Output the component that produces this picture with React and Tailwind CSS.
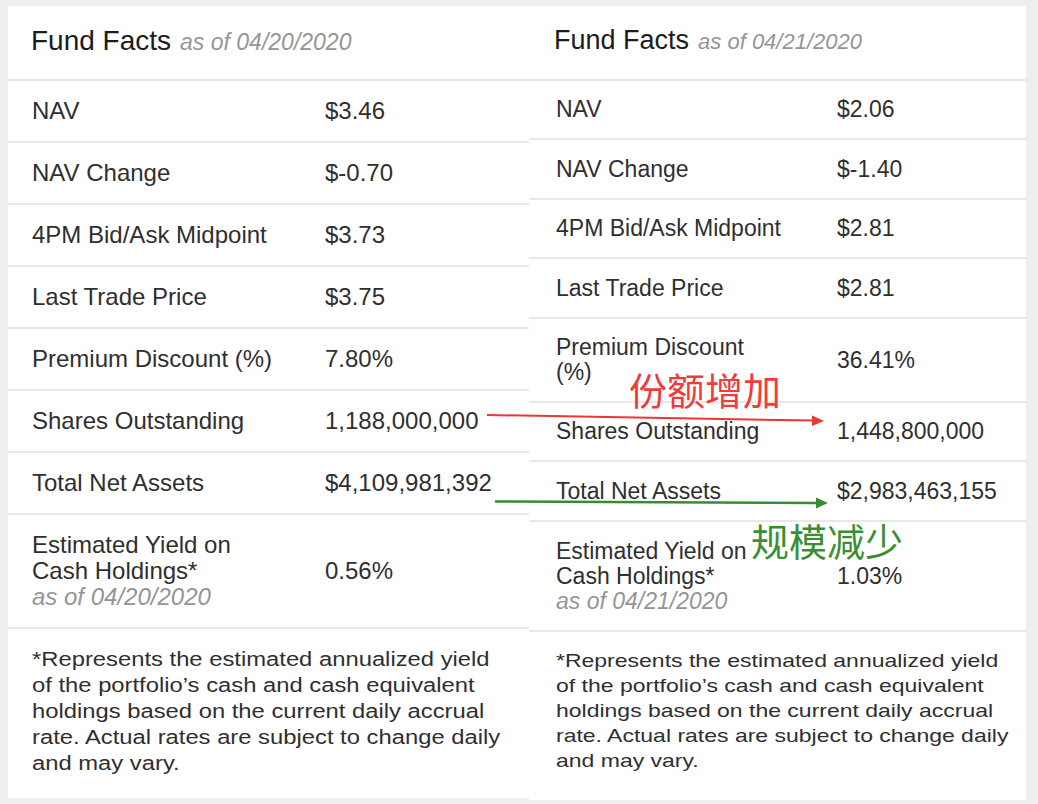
import React from "react";

const footnote = [
  "*Represents the estimated annualized yield",
  "of the portfolio’s cash and cash equivalent",
  "holdings based on the current daily accrual",
  "rate. Actual rates are subject to change daily",
  "and may vary.",
];

const panels = [
  {
    date: "04/20/2020",
    yieldValue: "0.56%",
    rows: [
      [["NAV"], "$3.46", "h-[62px]"],
      [["NAV Change"], "$-0.70", "h-[62px]"],
      [["4PM Bid/Ask Midpoint"], "$3.73", "h-[62px]"],
      [["Last Trade Price"], "$3.75", "h-[62px]"],
      [["Premium Discount (%)"], "7.80%", "h-[62px]"],
      [["Shares Outstanding"], "1,188,000,000", "h-[62px]"],
      [["Total Net Assets"], "$4,109,981,392", "h-[62px]"],
    ],
    panel: "w-[521px] h-[792px]",
    head: "h-[75px] pl-[23px] pt-[19px]",
    title: "text-[28px] leading-[28px]",
    sub: "text-[23px]",
    row: "pl-[24px] text-[24px] leading-[26px]",
    label: "w-[293px]",
    yieldRow: "h-[114px]",
    note: "pl-[24px] pt-[17px] text-[19.5px] leading-[26px]",
    noteLine: "origin-left scale-x-[1.22] whitespace-nowrap",
  },
  {
    date: "04/21/2020",
    yieldValue: "1.03%",
    rows: [
      [["NAV"], "$2.06", "h-[59px]"],
      [["NAV Change"], "$-1.40", "h-[60px]"],
      [["4PM Bid/Ask Midpoint"], "$2.81", "h-[59px]"],
      [["Last Trade Price"], "$2.81", "h-[60px]"],
      [["Premium Discount", "(%)"], "36.41%", "h-[84px]"],
      [["Shares Outstanding"], "1,448,800,000", "h-[59px]"],
      [["Total Net Assets"], "$2,983,463,155", "h-[60px]"],
    ],
    panel: "w-[497px] h-[794px]",
    head: "h-[75px] pl-[25px] pt-[19px]",
    title: "text-[27px] leading-[28px]",
    sub: "text-[22px]",
    row: "pl-[27px] text-[23px] leading-[25px]",
    label: "w-[281px]",
    yieldRow: "h-[110px]",
    note: "pl-[27px] pt-[16px] text-[19px] leading-[25px]",
    noteLine: "origin-left scale-x-[1.21] whitespace-nowrap",
  },
];

function FactsPanel({ p }) {
  return (
    <div className={`flex flex-col bg-white text-[#2f2f2f] ${p.panel}`}>
      <div className={`flex items-baseline gap-[9px] border-b-2 border-[#e8e8e8] ${p.head}`}>
        <span className={`text-[#1c1c1c] ${p.title}`}>Fund Facts</span>
        <span className={`italic text-[#959595] ${p.sub}`}>as of {p.date}</span>
      </div>

      {p.rows.map(([label, value, h]) => (
        <div key={label[0]} className={`flex items-center border-b-2 border-[#e8e8e8] ${h} ${p.row}`}>
          <div className={p.label}>
            {label.map((l) => (
              <div key={l}>{l}</div>
            ))}
          </div>
          <div>{value}</div>
        </div>
      ))}

      <div className={`flex items-center border-b-2 border-[#e8e8e8] ${p.yieldRow} ${p.row}`}>
        <div className={p.label}>
          <div>Estimated Yield on</div>
          <div>Cash Holdings*</div>
          <div className="italic text-[#959595]">as of {p.date}</div>
        </div>
        <div>{p.yieldValue}</div>
      </div>

      <div className={p.note}>
        {footnote.map((line) => (
          <div key={line} className={p.noteLine}>
            {line}
          </div>
        ))}
      </div>
    </div>
  );
}

export default function App() {
  return (
    <div className="relative h-[804px] w-[1038px] overflow-hidden bg-[#eeeeee] pl-[8px] pt-[6px] font-['Liberation_Sans',Arial,sans-serif]">
      <div className="flex items-start">
        {panels.map((p) => (
          <FactsPanel key={p.date} p={p} />
        ))}
      </div>

      {/* annotations drawn over the two screenshots */}
      <svg className="pointer-events-none absolute left-0 top-0" width="1038" height="804">
        <line x1="487" y1="415" x2="814" y2="420.5" stroke="#ef3434" strokeWidth="2" />
        <polygon points="824,421 812,415.5 812,426" fill="#ef3434" />
        <line x1="495" y1="501.5" x2="818" y2="503" stroke="#378c32" strokeWidth="2.5" />
        <polygon points="828,503 816,497.5 816,508.5" fill="#378c32" />
      </svg>
      <div className="absolute left-[629px] top-[371px] font-['Noto_Sans_CJK_SC',sans-serif] text-[38px] leading-[36px] text-[#ef3b3b]">
        份额增加
      </div>
      <div className="absolute left-[751px] top-[522px] font-['Noto_Sans_CJK_SC',sans-serif] text-[38px] leading-[36px] text-[#3a8f33]">
        规模减少
      </div>
    </div>
  );
}
